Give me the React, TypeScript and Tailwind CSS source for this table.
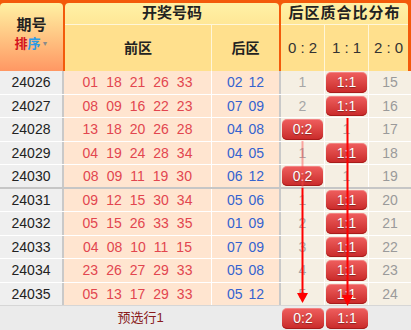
import React from 'react';

interface Row {
    no: string;
    front: string[];
    back: string[];
    dist: string[];
}

// 'B' marks the cell that holds the hit badge
const rows: Row[] = [
    { no: '24026', front: ['01', '18', '21', '26', '33'], back: ['02', '12'], dist: ['1', 'B', '15'] },
    { no: '24027', front: ['08', '09', '16', '22', '23'], back: ['07', '09'], dist: ['2', 'B', '16'] },
    { no: '24028', front: ['13', '18', '20', '26', '28'], back: ['04', '08'], dist: ['B', '1', '17'] },
    { no: '24029', front: ['04', '19', '24', '28', '34'], back: ['04', '05'], dist: ['1', 'B', '18'] },
    { no: '24030', front: ['08', '09', '11', '19', '30'], back: ['06', '12'], dist: ['B', '1', '19'] },
    { no: '24031', front: ['09', '12', '15', '30', '34'], back: ['05', '06'], dist: ['1', 'B', '20'] },
    { no: '24032', front: ['05', '15', '26', '33', '35'], back: ['01', '09'], dist: ['2', 'B', '21'] },
    { no: '24033', front: ['04', '08', '10', '11', '15'], back: ['07', '09'], dist: ['3', 'B', '22'] },
    { no: '24034', front: ['23', '26', '27', '29', '33'], back: ['05', '08'], dist: ['4', 'B', '23'] },
    { no: '24035', front: ['05', '13', '17', '29', '33'], back: ['05', '12'], dist: ['5', 'B', '24'] },
];

const labels = ['0:2', '1:1', '2:0'];

const Badge: React.FC<{ text: string }> = ({ text }) => (
    <div className="flex h-full w-full items-center justify-center rounded-[5px] bg-linear-to-b from-[#ef5e5e] to-[#c92828] text-[14px] text-white shadow-[inset_0_1px_0_rgba(255,255,255,0.25),inset_0_-1px_0_#a81c1c] [text-shadow:0_1px_1px_rgba(0,0,0,0.35)]">
        {text}
    </div>
);

const App: React.FC = () => {
    return (
        <div className="relative h-[330px] w-[411px] overflow-hidden bg-white font-['Liberation_Sans','Noto_Sans_CJK_SC',sans-serif]">
            {/* header */}
            <div className="flex h-[71px] bg-[#f35a0b] pt-[3px] pr-[3px]">
                <div className="flex w-[63px] flex-col items-center rounded-t-[4px] bg-linear-to-b from-[#fff1a3] to-[#ff9763] pt-[12px]">
                    <div className="text-[15px] font-bold leading-[20px] text-[#222]">期号</div>
                    <div className="flex items-center text-[13px] font-bold leading-[18px]">
                        <span className="text-[#d3141e]">排</span>
                        <span className="text-[#2a9be6]">序</span>
                        <span className="ml-[1px] text-[7px] text-[#8a8a8a]">▼</span>
                    </div>
                </div>
                <div className="ml-[2px] flex w-[214px] flex-col overflow-hidden rounded-t-[4px]">
                    <div className="flex h-[22px] items-center justify-center border-b border-[#fff6d8] bg-linear-to-b from-[#fff1a6] to-[#ffe796] text-[15px] font-bold text-[#222]">
                        开奖号码
                    </div>
                    <div className="flex flex-1 bg-[#ffe08d] text-[14px] font-bold text-[#222]">
                        <div className="flex w-[147px] items-center justify-center border-r border-[#fff6d8]">前区</div>
                        <div className="flex flex-1 items-center justify-center">后区</div>
                    </div>
                </div>
                <div className="ml-[2px] flex flex-1 flex-col overflow-hidden rounded-t-[4px]">
                    <div className="flex h-[22px] items-center justify-center border-b border-[#fff6d8] bg-linear-to-b from-[#fff1a6] to-[#ffe796] text-[15px] font-bold tracking-[1px] text-[#222]">
                        后区质合比分布
                    </div>
                    <div className="flex flex-1 bg-[#ffe08d] text-[15px] text-[#333]">
                        <div className="flex w-[44px] items-center justify-center border-r border-[#fff6d8]">0 : 2</div>
                        <div className="flex w-[44px] items-center justify-center border-r border-[#fff6d8]">1 : 1</div>
                        <div className="flex flex-1 items-center justify-center">2 : 0</div>
                    </div>
                </div>
            </div>

            {/* rows */}
            {rows.map((row, i) => (
                <div
                    key={row.no}
                    className={`flex ${i % 2 === 0 ? 'h-[24px]' : 'h-[23px]'} ${i === 4 ? 'border-b-2 border-[#c6c6c6]' : i === 9 ? 'border-b border-[#d6d6d6]' : 'border-b border-white'}`}
                >
                    <div className="flex w-[64px] items-center justify-center border-r-2 border-[#c9c9c9] bg-[#efefef] text-[14px] text-[#222]">
                        {row.no}
                    </div>
                    <div className="flex w-[148px] items-center justify-center gap-[8px] border-r border-white bg-[#ffe5d0] text-[14px] text-[#e2464f]">
                        {row.front.map((n, j) => (
                            <span key={j}>{n}</span>
                        ))}
                    </div>
                    <div className="flex w-[69px] items-center justify-center gap-[6px] border-r-2 border-[#c9c9c9] bg-[#ffe5d0] text-[14px] text-[#3563cf]">
                        {row.back.map((n, j) => (
                            <span key={j}>{n}</span>
                        ))}
                    </div>
                    {row.dist.map((d, j) => (
                        <div
                            key={j}
                            className={`flex items-center justify-center bg-[#f5efe3] text-[14px] ${j === 2 ? 'flex-1 text-[#9a9a9a]' : 'w-[44px] border-r border-white text-[#a6a6a6]'} ${d === 'B' ? 'p-[1px]' : ''}`}
                        >
                            {d === 'B' ? <Badge text={labels[j]} /> : d}
                        </div>
                    ))}
                </div>
            ))}

            {/* footer */}
            <div className="flex h-[24px] bg-[#ebebeb]">
                <div className="flex w-[281px] items-center justify-center text-[13px] text-[#8a1c1c]">预选行1</div>
                <div className="w-[44px] p-[1px] pt-[2px]">
                    <Badge text="0:2" />
                </div>
                <div className="w-[44px] p-[1px] pt-[2px]">
                    <Badge text="1:1" />
                </div>
                <div className="flex-1" />
            </div>

            {/* trend arrows */}
            <svg className="pointer-events-none absolute left-0 top-0" width="411" height="330" viewBox="0 0 411 330">
                <line x1="302.5" y1="141" x2="302.5" y2="188" stroke="#ff4a4a" strokeWidth="2" opacity="0.45" />
                <line x1="302.5" y1="188" x2="302.5" y2="294" stroke="#ff0000" strokeWidth="2" />
                <polygon points="297,293 308,293 302.5,303" fill="#ff0000" />
                <line x1="347.5" y1="118" x2="347.5" y2="296" stroke="#ff0000" strokeWidth="2" />
                <polygon points="342,295 353,295 347.5,306" fill="#ff0000" />
            </svg>
        </div>
    );
};

export default App;
